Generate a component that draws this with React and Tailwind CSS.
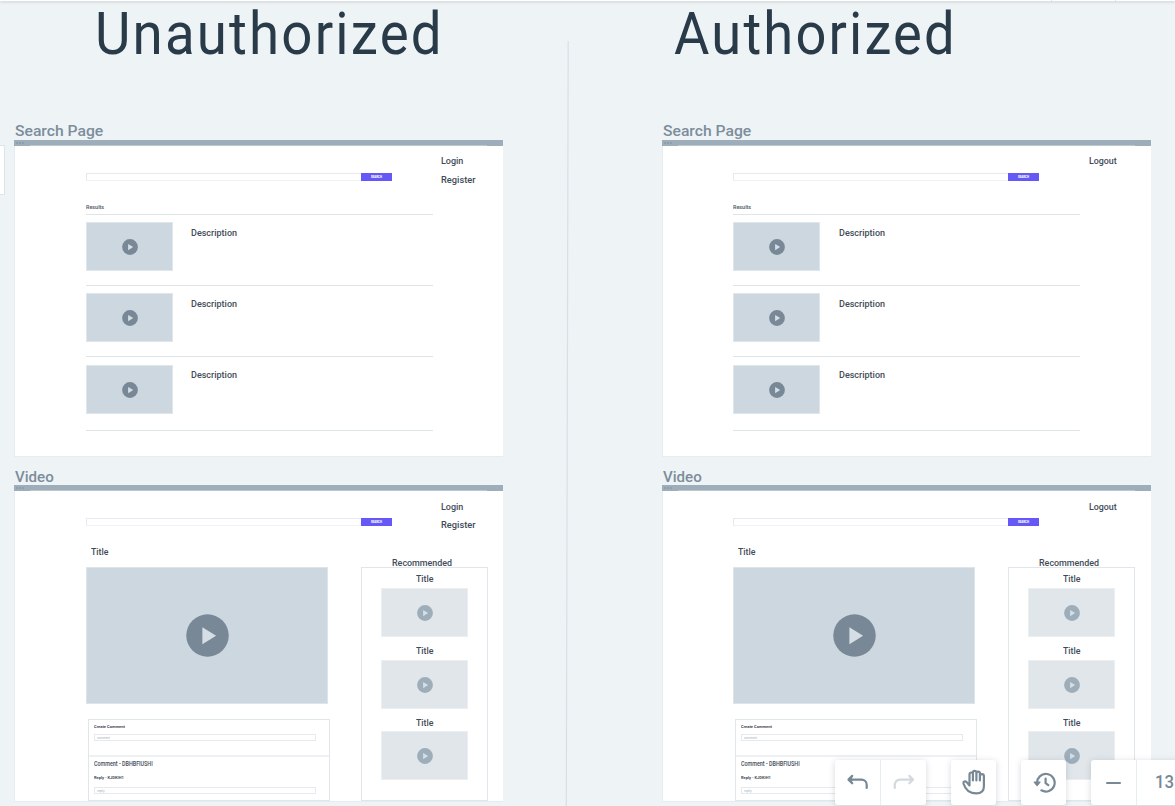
import React, { useLayoutEffect, useRef, useState } from "react";

// Text squeezed or stretched horizontally to a fixed width, as the condensed wireframe face is.
function Fit({ w, className = "", children }) {
  const ref = useRef(null);
  const [s, setS] = useState(1);
  useLayoutEffect(() => {
    setS(w / ref.current.offsetWidth);
  }, [w]);
  return (
    <div className={"whitespace-nowrap " + className} style={{ width: w }}>
      <span ref={ref} className="inline-block origin-left" style={{ transform: `scaleX(${s})` }}>
        {children}
      </span>
    </div>
  );
}

function Play({ className }) {
  return (
    <svg viewBox="0 0 16 16" className={className}>
      <circle cx="8" cy="8" r="7.9" fill="currentColor" />
      <path d="M6.1 4.9v6.4L11.2 8.1z" className="fill-[#d5dee5]" />
    </svg>
  );
}

function Label({ w, children }) {
  return (
    <Fit w={w} className="ml-px h-[18px] text-[15.5px] leading-[18px] font-medium text-[#7c8d9b]">
      {children}
    </Fit>
  );
}

const small = "h-3 text-[9.8px] leading-3 font-medium text-[#3f4b57]";

function Frame({ children }) {
  return (
    <div className="flex h-[317px] w-[489px] flex-col border-b border-l border-[#e6ecf0] bg-white">
      <div className="-ml-px flex h-1.5 shrink-0 items-end bg-[#9dadb9]">
        <div className="mb-[2px] ml-[2px] flex w-3 gap-px">
          <i className="size-[2px] bg-[#8d9fac]" />
          <i className="size-[2px] bg-[#8d9fac]" />
          <i className="size-[2px] bg-[#8d9fac]" />
        </div>
        <div className="mr-4 ml-0.5 h-px flex-1 bg-[#bcc8d0]" />
      </div>
      {children}
    </div>
  );
}

function TopRow({ auth, gap }) {
  return (
    <div className={"flex h-[47px] shrink-0 " + (auth ? "pl-[70px]" : "pl-[71px]")}>
      <div className="mt-[27px] flex h-[9px] w-[306px]">
        <div className="h-[8px] flex-1 border border-r-0 border-[#e5eaee] border-b-[#f0f2f4]" />
        <div className="flex h-[8px] w-[31px] items-center justify-center bg-[#6658f6]">
          <Fit w={11} className="h-[3px] text-[2.8px] leading-[3px] font-black text-white">
            SEARCH
          </Fit>
        </div>
      </div>
      <div className={"flex flex-col " + gap + (auth ? " ml-[50px]" : " ml-[49px]")}>
        {auth ? (
          <Fit w={28} className={small}>Logout</Fit>
        ) : (
          <>
            <Fit w={22} className={small}>Login</Fit>
            <Fit w={34} className={small}>Register</Fit>
          </>
        )}
      </div>
    </div>
  );
}

function Result({ auth, className, text }) {
  return (
    <div className={"flex border-b border-[#dde5e9] " + className}>
      <div className="flex h-[49px] w-[87px] items-center justify-center border border-[#dfe7ec] bg-[#cdd7e0]">
        <Play className="size-4 text-[#788896]" />
      </div>
      <Fit w={46} className={text + (auth ? " ml-[19px] " : " ml-[18px] ") + small}>Description</Fit>
    </div>
  );
}

function SearchFrame({ auth }) {
  return (
    <Frame>
      <TopRow auth={auth} gap="pt-[9px] gap-[7px]" />
      <div className={"w-[347px] " + (auth ? "ml-[70px]" : "ml-[71px]")}>
        <div className="h-[22px] border-b border-[#dde5e9] pt-[10px]">
          <Fit w={18} className="h-2 text-[6px] leading-[8px] font-semibold text-[#56626d]">Results</Fit>
        </div>
        <Result auth={auth} text="mt-[5px]" className="mt-[7px] h-[64px]" />
        <Result auth={auth} text="mt-[5px]" className="mt-[7px] h-[64px]" />
        <Result auth={auth} text="mt-1" className="mt-[8px] h-[66px]" />
      </div>
    </Frame>
  );
}

function Recommended({ className }) {
  return (
    <div className={"flex flex-col items-center " + className}>
      <Fit w={17} className={small}>Title</Fit>
      <div className="flex h-[49px] w-[87px] items-center justify-center border border-[#eceff2] bg-[#e1e6ea]">
        <Play className="size-4 text-[#9dadb9]" />
      </div>
    </div>
  );
}

function Field({ w, children }) {
  return (
    <div className="ml-[5px] h-[7px] w-[222px] border border-[#e4eaee] pl-0.5">
      <Fit w={w} className="h-[5px] text-[4px] leading-[5px] text-[#9fb3c2]">{children}</Fit>
    </div>
  );
}

function VideoFrame({ auth }) {
  return (
    <Frame>
      <TopRow auth={auth} gap="pt-[10px] gap-[6px]" />
      <div className={"flex min-h-0 flex-1 " + (auth ? "pl-[70px]" : "pl-[71px]")}>
        <div className="w-[275px]">
          <Fit w={17} className={"mt-[8px] ml-[5px] " + small}>Title</Fit>
          <div className="mt-[9px] flex h-[137px] w-[242px] items-center justify-center border border-[#dde5ea] bg-[#cdd7e0]">
            <Play className="size-[43px] text-[#788896]" />
          </div>
          <div className="mt-[15px] ml-[2px] h-[82px] w-[242px] border border-[#dfe7ea]">
            <div className="h-[37px] border-b-2 border-[#eef1f3] pt-1">
              <Fit w={31} className="ml-[5px] h-[5px] text-[4.2px] leading-[5px] font-bold text-[#3f4b57]">Create Comment</Fit>
              <div className="h-[5px]" />
              <Field w={13}>comment</Field>
            </div>
            <div className="pt-[2px]">
              <Fit w={59} className="ml-[5px] h-[9px] text-[7.2px] leading-[9px] font-medium text-[#3f4b57]">Comment - DBHBFIUSHI</Fit>
              <div className="h-[7px]" />
              <Fit w={30} className="ml-[5px] h-[5px] text-[4.4px] leading-[5px] font-bold text-[#3f4b57]">Reply - KJDKIH1</Fit>
              <div className="h-[7px]" />
              <Field w={8}>reply</Field>
            </div>
          </div>
        </div>
        <div className="flex w-[127px] flex-col pt-[19px]">
          <Fit w={60} className={"ml-[31px] " + small}>Recommended</Fit>
          <div className="-mt-[2px] h-[234px] border border-[#dfe7ea] pt-[5px]">
            <Recommended className="h-[72px] gap-[3px]" />
            <Recommended className="h-[72px] gap-[3px]" />
            <Recommended className="h-[72px] gap-[2px]" />
          </div>
        </div>
      </div>
    </Frame>
  );
}

function Column({ title, auth }) {
  return (
    <section className="w-[489px] shrink-0">
      <div className="h-[122px] pt-px">
        {auth ? (
          <Fit w={283} className="ml-[12px] h-[66px] text-[58.5px] leading-[66px] tracking-[0.04em] text-[#293a49]">{title}</Fit>
        ) : (
          <Fit w={349} className="ml-[81px] h-[66px] text-[58.5px] leading-[66px] tracking-[0.04em] text-[#293a49]">{title}</Fit>
        )}
      </div>
      <Label w={88}>Search Page</Label>
      <SearchFrame auth={auth} />
      <div className="h-[11px]" />
      <Label w={39}>Video</Label>
      <div className="-mt-px" />
      <VideoFrame auth={auth} />
    </section>
  );
}

const tile = "flex h-[45px] items-center rounded-[3px] bg-white shadow-[0_1px_6px_rgba(60,80,100,0.22)]";
const cell = "flex h-full w-[45px] items-center justify-center";
const stroke = { fill: "none", stroke: "currentColor", strokeWidth: 2.2, strokeLinecap: "round", strokeLinejoin: "round" };

function Toolbar() {
  return (
    <div className="absolute top-[760px] left-[835px] flex gap-[25px] text-[#778896]">
      <div className={tile}>
        <div className={cell + " w-[46px] border-r border-[#e8edf1]"}>
          <svg viewBox="0 0 24 24" className="size-6" {...stroke}>
            <path d="M6.2 4.9L2.5 8.6l3.7 3.7M2.8 8.6h12.7a5.2 5.2 0 0 1 5.2 5.2V17" />
            <path d="M2.2 8.6l4-3.2v6.4z" fill="currentColor" stroke="none" />
          </svg>
        </div>
        <div className={cell + " text-[#d3dadf]"}>
          <svg viewBox="0 0 24 24" className="size-6" {...stroke}>
            <path d="M17.3 4.9L21 8.6l-3.7 3.7M20.7 8.6H8a5.2 5.2 0 0 0-5.2 5.2V17" />
          </svg>
        </div>
      </div>
      <div className={tile}>
        <div className={cell}>
          <svg viewBox="0 0 26 26" className="mb-px size-[26px]" {...stroke}>
            <path d="M8.5 16.5V5.2a1.7 1.7 0 0 1 3.4 0V11.5M11.9 11.5V3.6a1.75 1.75 0 0 1 3.5 0V11.5M15.4 11.5V4.4a1.75 1.75 0 0 1 3.5 0V11.5M18.9 7.2a2 2 0 0 1 4 0V17.2c0 4.6-3 7.2-7.6 7.2-6.6 0-11-3.8-12.8-9.9-.5-2.1 1.6-2.7 2.9-1.6L8.5 16.5" />
          </svg>
        </div>
      </div>
      <div className={tile}>
        <div className={cell}>
          <svg viewBox="0 0 24 24" className="size-6" {...stroke}>
            <path d="M5.1 12.4A8.8 8.8 0 1 1 9.4 19.3M13.6 7.6v4.6l2.7 1.9" />
            <path d="M2.2 11.2h5.8l-2.9 3.4z" fill="currentColor" strokeWidth="1.2" />
          </svg>
        </div>
      </div>
      <div className={tile}>
        <div className={cell + " w-[46px] border-r border-[#e8edf1]"}>
          <div className="h-0.5 w-[15px] rounded bg-[#778896]" />
        </div>
        <div className="w-[60px] pl-[18px]">
          <Fit w={19} className="mb-0.5 text-[18.5px] leading-6 font-medium">13</Fit>
        </div>
      </div>
    </div>
  );
}

export default function App() {
  return (
    <main className="relative h-[806px] w-[1175px] overflow-hidden bg-[#eef3f6] font-['Roboto','Liberation_Sans',sans-serif]">
      <div className="flex gap-[159px] pl-[14px]">
        <Column title="Unauthorized" />
        <Column title="Authorized" auth />
      </div>
      <svg className="absolute top-0 left-[560px] h-[806px] w-3">
        <path d="M8.2 41L6.3 806" stroke="#d9e0e5" strokeWidth="1.2" />
      </svg>
      <div className="absolute top-[145px] -left-2 h-[50px] w-[13px] border border-[#dce5ea] bg-white" />
      <div className="absolute top-0 left-0 flex h-px w-full justify-end gap-[63px] bg-white pr-[59px] shadow-[0_1px_3px_rgba(0,0,0,0.25)]">
        <i className="w-px bg-[#dce3e8]" />
        <i className="w-px bg-[#dce3e8]" />
      </div>
      <Toolbar />
    </main>
  );
}
